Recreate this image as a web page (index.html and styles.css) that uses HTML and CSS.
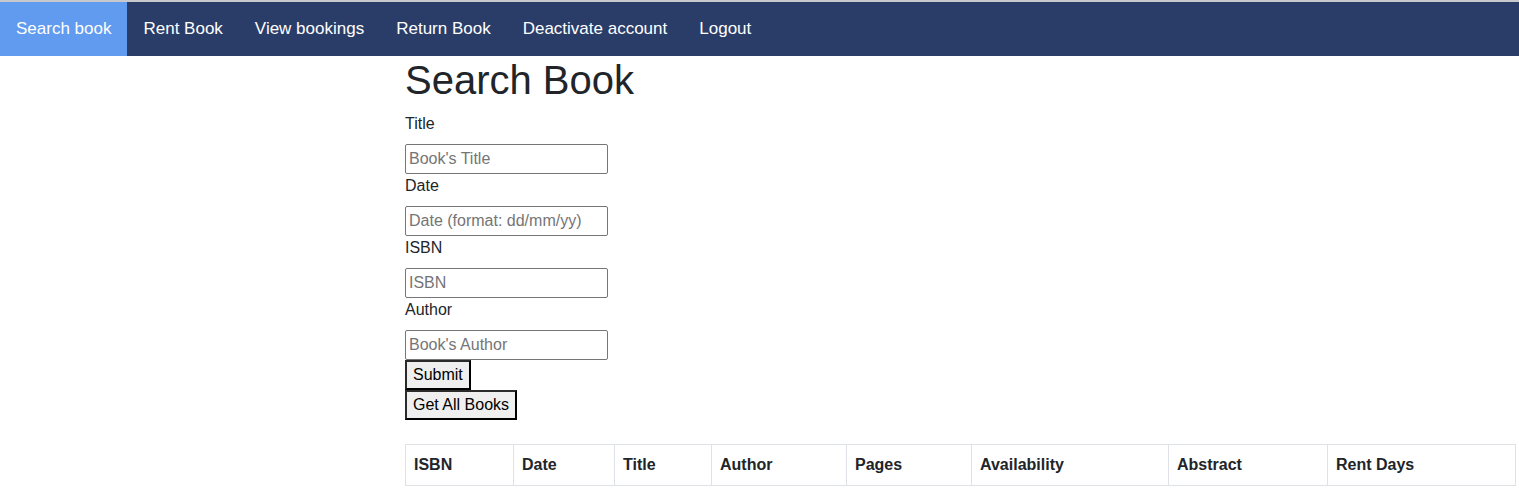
FILE: index.html
```html
<!DOCTYPE html>
<html lang="en">
<head>
<meta charset="utf-8">
<title>Search Book</title>
<link rel="stylesheet" href="styles.css">
</head>
<body>
<nav class="topnav">
  <a class="nav-link active" href="#">Search book</a>
  <a class="nav-link" href="#">Rent Book</a>
  <a class="nav-link" href="#">View bookings</a>
  <a class="nav-link" href="#">Return Book</a>
  <a class="nav-link" href="#">Deactivate account</a>
  <a class="nav-link" href="#">Logout</a>
</nav>
<main class="content">
  <h1 class="page-title">Search Book</h1>
  <form class="search-form">
    <label class="field-label" for="title">Title</label>
    <input class="field-input" id="title" type="text" placeholder="Book's Title">
    <label class="field-label" for="date">Date</label>
    <input class="field-input" id="date" type="text" placeholder="Date (format: dd/mm/yy)">
    <label class="field-label" for="isbn">ISBN</label>
    <input class="field-input" id="isbn" type="text" placeholder="ISBN">
    <label class="field-label" for="author">Author</label>
    <input class="field-input" id="author" type="text" placeholder="Book's Author">
    <button class="btn" type="button">Submit</button>
    <button class="btn" type="button">Get All Books</button>
  </form>
  <table class="books">
    <thead>
      <tr>
        <th class="c-isbn">ISBN</th>
        <th class="c-date">Date</th>
        <th class="c-title">Title</th>
        <th class="c-author">Author</th>
        <th class="c-pages">Pages</th>
        <th class="c-avail">Availability</th>
        <th class="c-abstract">Abstract</th>
        <th class="c-rent">Rent Days</th>
      </tr>
    </thead>
    <tbody></tbody>
  </table>
</main>
</body>
</html>
```

FILE: styles.css
```css
html, body {
  margin: 0;
  padding: 0;
}
body {
  font-family: "Liberation Sans", Arial, sans-serif;
  font-size: 16px;
  line-height: 1.5;
  color: #212529;
  background: #fff;
  border-top: 2px solid #c6c8cc;
}
.topnav {
  display: flex;
  background: #2a3d69;
  height: 54px;
}
.nav-link {
  display: block;
  padding: 17px 16px;
  line-height: 20px;
  color: #fff;
  text-decoration: none;
  font-size: 17px;
}
.nav-link.active {
  background: #609bef;
}
.content {
  width: 1110px;
  margin-left: 405px;
}
.page-title {
  margin: 0 0 8px;
  font-size: 40px;
  font-weight: 500;
  line-height: 1.2;
}
.search-form {
  display: flex;
  flex-direction: column;
  align-items: flex-start;
}
.field-label {
  display: block;
  margin-bottom: 8px;
  line-height: 24px;
}
.field-input {
  box-sizing: border-box;
  width: 203px;
  height: 30px;
  margin: 0;
  padding: 0 3px;
  font-family: "Liberation Sans", Arial, sans-serif;
  font-size: 16px;
  color: #212529;
  border: 1px solid #767676;
  border-radius: 2px;
  background: #fff;
}
.field-input::placeholder {
  color: #757575;
}
.btn {
  box-sizing: border-box;
  height: 30px;
  margin: 0;
  padding: 0 6px;
  font-family: "Liberation Sans", Arial, sans-serif;
  font-size: 16px;
  color: #000;
  background: #efefef;
  border: 2px solid #2b2b2b;
  border-right-color: #000;
  border-bottom-color: #000;
  border-radius: 0;
}
.books {
  margin-top: 24px;
  width: 1110px;
  border-collapse: collapse;
  table-layout: fixed;
}
.books th {
  box-sizing: border-box;
  text-align: left;
  font-weight: 700;
  padding: 8px;
  line-height: 24px;
  border: 1px solid #dee2e6;
}
.c-isbn { width: 108px; }
.c-date { width: 101px; }
.c-title { width: 97px; }
.c-author { width: 135px; }
.c-pages { width: 125px; }
.c-avail { width: 197px; }
.c-abstract { width: 159px; }
.c-rent { width: 188px; }
```
